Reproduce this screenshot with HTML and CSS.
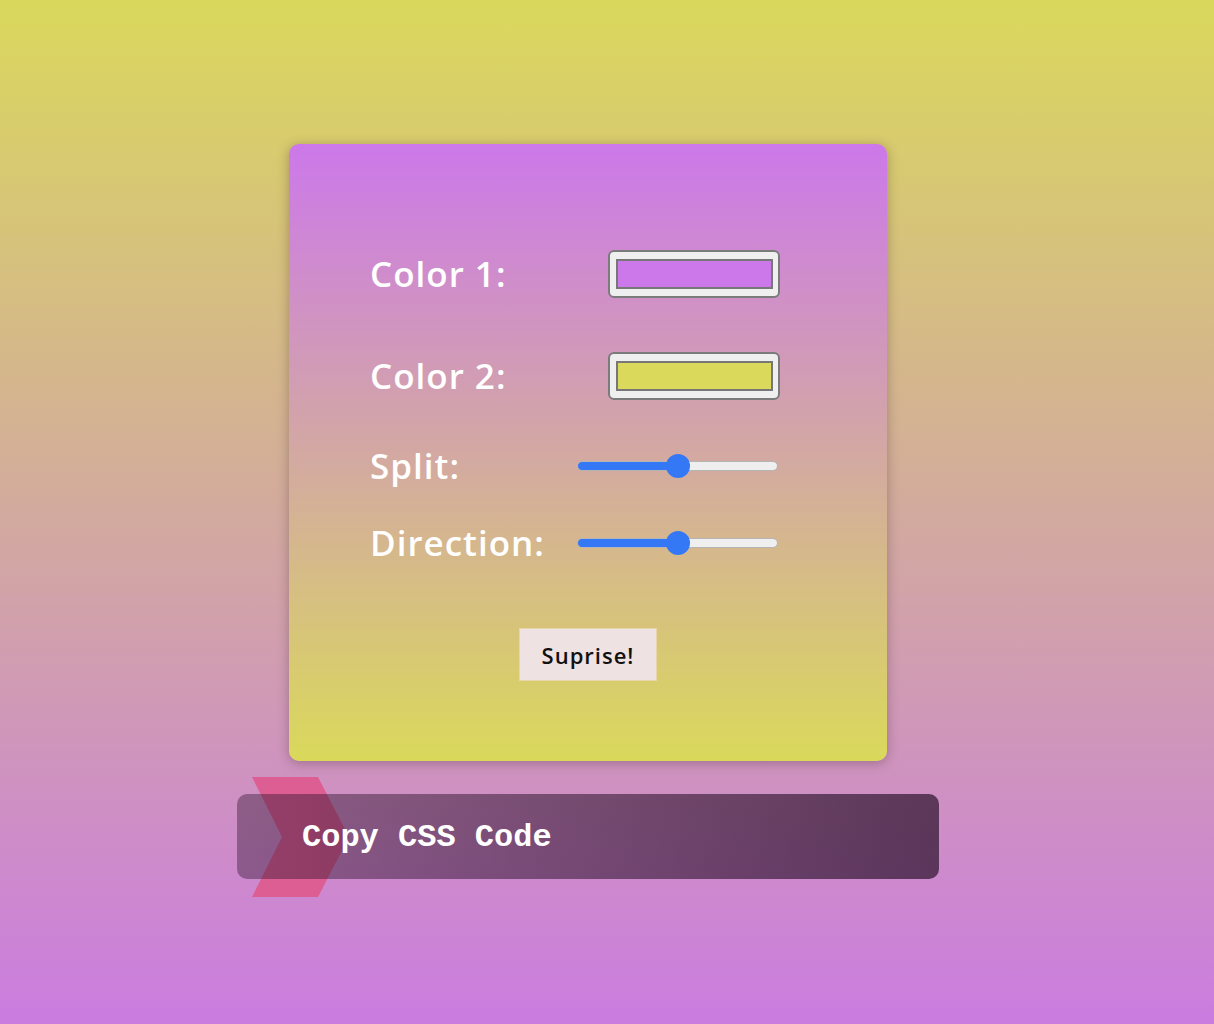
FILE: index.html
```html
<!DOCTYPE html>
<html>
<head>
<meta charset="utf-8">
<title>Gradient Generator</title>
<link rel="stylesheet" href="styles.css">
</head>
<body>
<div class="page">
  <div class="card">
    <div class="row row-color">
      <label class="label" for="c1">Color 1:</label>
      <input class="color" id="c1" type="color" value="#cc78ea">
    </div>
    <div class="row row-color row-gap2">
      <label class="label" for="c2">Color 2:</label>
      <input class="color" id="c2" type="color" value="#dad95b">
    </div>
    <div class="row row-range row-gap3">
      <label class="label" for="split">Split:</label>
      <input class="range" id="split" type="range" min="0" max="100" value="50">
    </div>
    <div class="row row-range row-gap4">
      <label class="label" for="dir">Direction:</label>
      <input class="range" id="dir" type="range" min="0" max="360" value="180">
    </div>
    <div class="actions">
      <button class="surprise" type="button">Suprise!</button>
    </div>
  </div>
  <div class="copy-wrap">
    <svg class="chevron" width="98" height="120" viewBox="0 0 98 120"><polygon points="0,0 66,0 97,60 66,120 0,120 30,60" fill="#dc5e93"/></svg>
    <div class="copy-bar">Copy CSS Code</div>
  </div>
</div>
</body>
</html>
```
FILE: styles.css
```css
html, body {
  margin: 0;
  padding: 0;
}
body {
  min-height: 100vh;
  background: linear-gradient(to bottom, #dad85c 0%, #cb7ce0 100%);
  font-family: "Open Sans", "Noto Sans", sans-serif;
}
.page {
  width: 1176px;
  padding-top: 144px;
  display: flex;
  flex-direction: column;
  align-items: center;
}
.card {
  width: 598px;
  height: 617px;
  box-sizing: border-box;
  border-radius: 10px;
  background: linear-gradient(to bottom, #cc78ea, #dad95b);
  box-shadow: 0 2px 12px rgba(60, 40, 40, 0.35);
  padding: 106px 0 0 81px;
  display: flex;
  flex-direction: column;
}
.row {
  display: grid;
  grid-template-columns: 207px 203px;
  align-items: center;
}
.row-color { height: 48px; }
.row-range { height: 40px; }
.row-gap2 { margin-top: 54px; }
.row-gap3 { margin-top: 46px; }
.row-gap4 { margin-top: 37px; }
.label {
  color: #ffffff;
  font-size: 35px;
  font-weight: 600;
  letter-spacing: 1px;
  line-height: 40px;
  white-space: nowrap;
}
.color {
  justify-self: end;
  -webkit-appearance: none;
  appearance: none;
  width: 172px;
  height: 48px;
  box-sizing: border-box;
  border: 2px solid #7b7b7b;
  border-radius: 6px;
  background: #efefef;
  padding: 0;
  margin: 0;
  cursor: pointer;
}
.color::-webkit-color-swatch-wrapper {
  padding: 7px 5px 7px 6px;
}
.color::-webkit-color-swatch {
  border: 2px solid #777777;
  border-radius: 0;
}
.range {
  -webkit-appearance: none;
  appearance: none;
  width: 201px;
  height: 24px;
  margin: 0;
  padding: 0;
  background: transparent;
}
.range::-webkit-slider-runnable-track {
  height: 10px;
  border-radius: 5px;
  box-sizing: border-box;
  border: 1px solid #b5b5b5;
  background: linear-gradient(to right, #3478f6 0%, #3478f6 50%, #efefef 50%, #efefef 100%);
}
.range::-webkit-slider-thumb {
  -webkit-appearance: none;
  appearance: none;
  width: 24px;
  height: 24px;
  border-radius: 50%;
  background: #3478f6;
  border: none;
  margin-top: -8px;
}
.actions {
  margin-top: 65px;
  padding-right: 81px;
  display: flex;
  justify-content: center;
}
.surprise {
  width: 138px;
  height: 53px;
  border: 1px solid #e8d6a8;
  background: #efe2e3;
  color: #111111;
  font-family: "Open Sans", "Noto Sans", sans-serif;
  font-size: 22px;
  font-weight: 600;
  letter-spacing: 1px;
  padding: 0;
  cursor: pointer;
}
.copy-wrap {
  position: relative;
  margin-top: 33px;
  width: 702px;
}
.chevron {
  position: absolute;
  left: 15px;
  top: -17px;
  z-index: 0;
}
.copy-bar {
  position: relative;
  z-index: 1;
  height: 85px;
  box-sizing: border-box;
  border-radius: 10px;
  background: linear-gradient(to right, rgba(40, 15, 40, 0.39), rgba(40, 15, 40, 0.69));
  padding-left: 65px;
  padding-top: 2px;
  display: flex;
  align-items: center;
  color: #ffffff;
  font-family: "Liberation Mono", "Courier New", monospace;
  font-weight: bold;
  font-size: 32px;
}
```
